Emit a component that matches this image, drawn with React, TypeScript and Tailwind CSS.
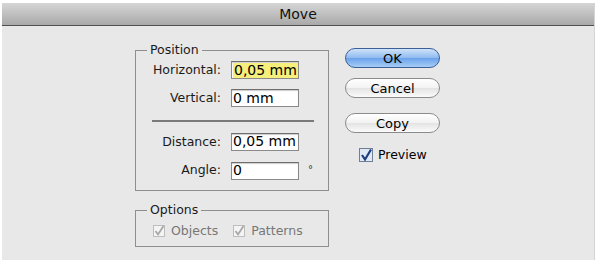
import React from "react";

const font = { fontFamily: '"DejaVu Sans", "Liberation Sans", sans-serif' };

function Field({ label, value, highlight, unit }: { label: string; value: string; highlight?: boolean; unit?: string }) {
  return (
    <div className="flex items-center">
      <span className="w-[85px] text-right text-[12.5px] text-[#1a1a1a]">{label}</span>
      <div className="ml-[10px] flex h-[18px] w-[68px] items-center border border-[#8a8a8a] border-t-[#6e6e6e] bg-white pl-[1px] text-[14px] text-black shadow-[inset_0_1px_1px_rgba(0,0,0,0.2)]">
        <span className={highlight ? "bg-[#f6ef7c] px-px leading-[15px]" : "leading-[15px]"}>{value}</span>
      </div>
      {unit && <span className="ml-[9px] -mt-[2px] text-[10px] text-[#333]">{unit}</span>}
    </div>
  );
}

function Check({ disabled }: { disabled?: boolean }) {
  if (disabled) {
    return (
      <svg width="12" height="12" viewBox="0 0 12 12">
        <rect x="0.5" y="0.5" width="11" height="11" fill="#f4f4f4" stroke="#bdbdbd" />
        <path d="M2.5 6 L5 9.5 L10.5 1" fill="none" stroke="#a8a8a8" strokeWidth="1.8" />
      </svg>
    );
  }
  return (
    <svg width="14" height="14" viewBox="0 0 14 14">
      <rect x="0.5" y="0.5" width="13" height="13" fill="#dfe9f6" stroke="#6f7f95" />
      <path d="M3 7 L6 11.5 L12 1.5" fill="none" stroke="#1c3f7c" strokeWidth="2.2" />
    </svg>
  );
}

function Group({ title, children, className }: { title: string; children: React.ReactNode; className?: string }) {
  return (
    <div className={"relative w-[194px] border border-[#8e8e8e] " + (className || "")}>
      <span className="absolute -top-[9px] left-[11px] bg-[#e8e8e8] px-[3px] text-[12.5px] leading-[16px] text-[#1a1a1a]">{title}</span>
      {children}
    </div>
  );
}

function Button({ label, primary }: { label: string; primary?: boolean }) {
  return (
    <div
      className={
        "flex h-[20px] w-[95px] items-center justify-center rounded-full border text-[13px] leading-none text-black " +
        (primary
          ? "border-[#3b5f96] bg-[linear-gradient(#cfe3fa,#8fbaf0_50%,#6aa2ea_51%,#a6cdf6)]"
          : "border-[#8b8b8b] bg-[linear-gradient(#ffffff,#f2f2f2_50%,#e3e3e3_51%,#fbfbfb)]")
      }
    >
      {label}
    </div>
  );
}

export default function App() {
  return (
    <div className="h-[266px] w-[599px] bg-white pl-[2px] pt-[3px]" style={font}>
      <div className="w-[593px] border-r border-[#d4d4d4]">
        <div className="flex h-[23px] items-center justify-center border-b border-[#4f4f4f] bg-[linear-gradient(#d6d6d6,#a9a9a9)] text-[14px] text-[#111]">
          Move
        </div>
        <div className="flex h-[234px] bg-[#e8e8e8] pl-[133px] pt-[24px]">
          <div className="flex flex-col">
            <Group title="Position" className="h-[141px]">
              <div className="flex flex-col pt-[10px]">
                <Field label="Horizontal:" value="0,05 mm" highlight />
                <div className="mt-[9px]">
                  <Field label="Vertical:" value="0 mm" />
                </div>
                <div className="ml-[16px] mt-[12px] h-[2px] w-[162px] bg-[#7a7a7a]" />
                <div className="mt-[11px]">
                  <Field label="Distance:" value="0,05 mm" />
                </div>
                <div className="mt-[10px]">
                  <Field label="Angle:" value="0" unit="°" />
                </div>
              </div>
            </Group>
            <Group title="Options" className="mt-[19px] h-[37px]">
              <div className="flex items-center pl-[17px] pt-[11px] text-[12.5px] text-[#777]">
                <Check disabled />
                <span className="ml-[6px]">Objects</span>
                <span className="ml-[15px]"><Check disabled /></span>
                <span className="ml-[6px]">Patterns</span>
              </div>
            </Group>
          </div>
          <div className="ml-[16px] -mt-[2px] flex flex-col">
            <Button label="OK" primary />
            <div className="mt-[10px]"><Button label="Cancel" /></div>
            <div className="mt-[15px]"><Button label="Copy" /></div>
            <div className="ml-[14px] mt-[13px] flex items-center text-[12.5px] text-black">
              <Check />
              <span className="ml-[5px]">Preview</span>
            </div>
          </div>
        </div>
      </div>
    </div>
  );
}
